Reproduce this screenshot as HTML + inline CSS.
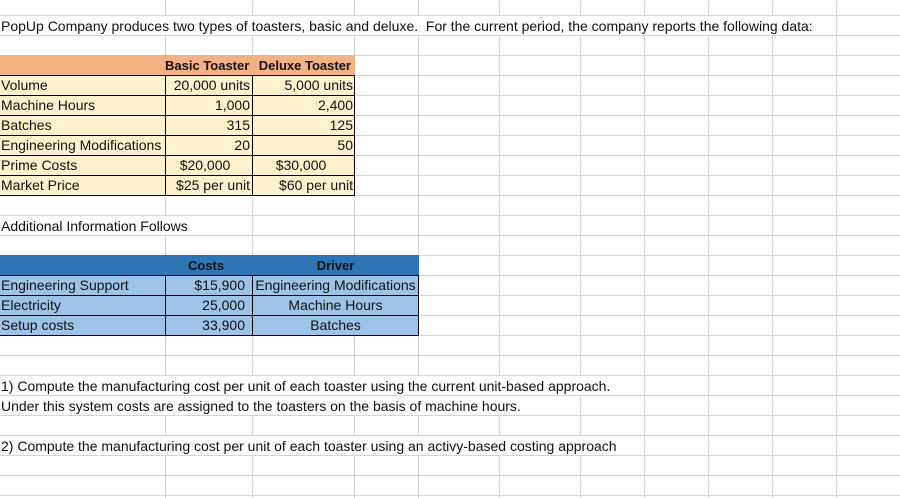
<!DOCTYPE html>
<html><head><style>
body{margin:0;width:900px;height:498px;overflow:hidden;background:#fff;font-family:"Liberation Sans",sans-serif;font-size:14px;color:#111;position:relative}
.h{position:absolute;left:0;width:900px;height:1px;background:#d4d4d4}
.v{position:absolute;top:0;height:498px;width:1px;background:#d4d4d4}
.f{position:absolute}
.t{position:absolute;height:19px;line-height:21px;white-space:nowrap}
.w{background:#fff;padding-right:4px}
.r{text-align:right}.c{text-align:center}.b{font-weight:bold;font-size:13px}
.bx{position:absolute;border:1px solid #000;box-sizing:border-box}
</style></head><body>
<div id="g"></div>
<script>
var g=document.getElementById('g'),s='';
[165,252,354,418,499,580,644,708,772,836].forEach(function(x){s+='<div class="v" style="left:'+x+'px"></div>'});
for(var y=15;y<498;y+=20)s+='<div class="h" style="top:'+y+'px"></div>';
g.innerHTML=s;
</script>
<div class="f" style="left:0;top:55px;width:355px;height:21px;background:#f4b183"></div>
<div class="f" style="left:0;top:75px;width:355px;height:121px;background:#fff2cc"></div>
<div class="f" style="left:0;top:255px;width:419px;height:21px;background:#2e75b6"></div>
<div class="f" style="left:0;top:276px;width:419px;height:60px;background:#9dc3e6"></div>
<script>
var s2='';
for(var i=0;i<6;i++){var y=75+i*20;
s2+='<div class="bx" style="left:0;top:'+y+'px;width:166px;height:21px;border-left:none"></div>';
s2+='<div class="bx" style="left:165px;top:'+y+'px;width:88px;height:21px"></div>';
s2+='<div class="bx" style="left:252px;top:'+y+'px;width:103px;height:21px"></div>';}
for(var i=0;i<3;i++){var y=275+i*20;
s2+='<div class="bx" style="left:0;top:'+y+'px;width:166px;height:21px;border-left:none"></div>';
s2+='<div class="bx" style="left:165px;top:'+y+'px;width:88px;height:21px"></div>';
s2+='<div class="bx" style="left:252px;top:'+y+'px;width:167px;height:21px"></div>';}
document.write(s2);
</script>

<div class="t w" style="left:0;top:16px;padding-left:1px">PopUp Company produces two types of toasters, basic and deluxe.&nbsp; For the current period, the company reports the following data:</div>
<div class="t b r" style="left:165px;top:55px;width:84px">Basic Toaster</div>
<div class="t b r" style="left:252px;top:55px;width:99px">Deluxe Toaster</div>
<div class="t" style="left:1px;top:75px">Volume</div><div class="t r" style="left:165px;top:75px;width:85px">20,000 units</div><div class="t r" style="left:252px;top:75px;width:101px">5,000 units</div>
<div class="t" style="left:1px;top:95px">Machine Hours</div><div class="t r" style="left:165px;top:95px;width:85px">1,000</div><div class="t r" style="left:252px;top:95px;width:101px">2,400</div>
<div class="t" style="left:1px;top:115px">Batches</div><div class="t r" style="left:165px;top:115px;width:85px">315</div><div class="t r" style="left:252px;top:115px;width:101px">125</div>
<div class="t" style="left:1px;top:135px">Engineering Modifications</div><div class="t r" style="left:165px;top:135px;width:85px">20</div><div class="t r" style="left:252px;top:135px;width:101px">50</div>
<div class="t" style="left:1px;top:155px">Prime Costs</div><div class="t c" style="left:165px;top:155px;width:80px">$20,000</div><div class="t c" style="left:252px;top:155px;width:98px">$30,000</div>
<div class="t" style="left:1px;top:175px">Market Price</div><div class="t r" style="left:165px;top:175px;width:85px">$25 per unit</div><div class="t r" style="left:252px;top:175px;width:101px">$60 per unit</div>
<div class="t w" style="left:0;top:216px;padding-left:1px">Additional Information Follows</div>
<div class="t b c" style="left:165px;top:255px;width:82px">Costs</div>
<div class="t b c" style="left:252px;top:255px;width:167px">Driver</div>
<div class="t" style="left:1px;top:275px">Engineering Support</div><div class="t r" style="left:165px;top:275px;width:80px">$15,900</div><div class="t c" style="left:252px;top:275px;width:167px">Engineering Modifications</div>
<div class="t" style="left:1px;top:295px">Electricity</div><div class="t r" style="left:165px;top:295px;width:80px">25,000</div><div class="t c" style="left:252px;top:295px;width:167px">Machine Hours</div>
<div class="t" style="left:1px;top:315px">Setup costs</div><div class="t r" style="left:165px;top:315px;width:80px">33,900</div><div class="t c" style="left:252px;top:315px;width:167px">Batches</div>
<div class="t w" style="left:0;top:376px;padding-left:1px">1) Compute the manufacturing cost per unit of each toaster using the current unit-based approach.</div>
<div class="t w" style="left:0;top:396px;padding-left:1px">Under this system costs are assigned to the toasters on the basis of machine hours.</div>
<div class="t w" style="left:0;top:436px;padding-left:1px">2) Compute the manufacturing cost per unit of each toaster using an activy-based costing approach</div>
</body></html>
